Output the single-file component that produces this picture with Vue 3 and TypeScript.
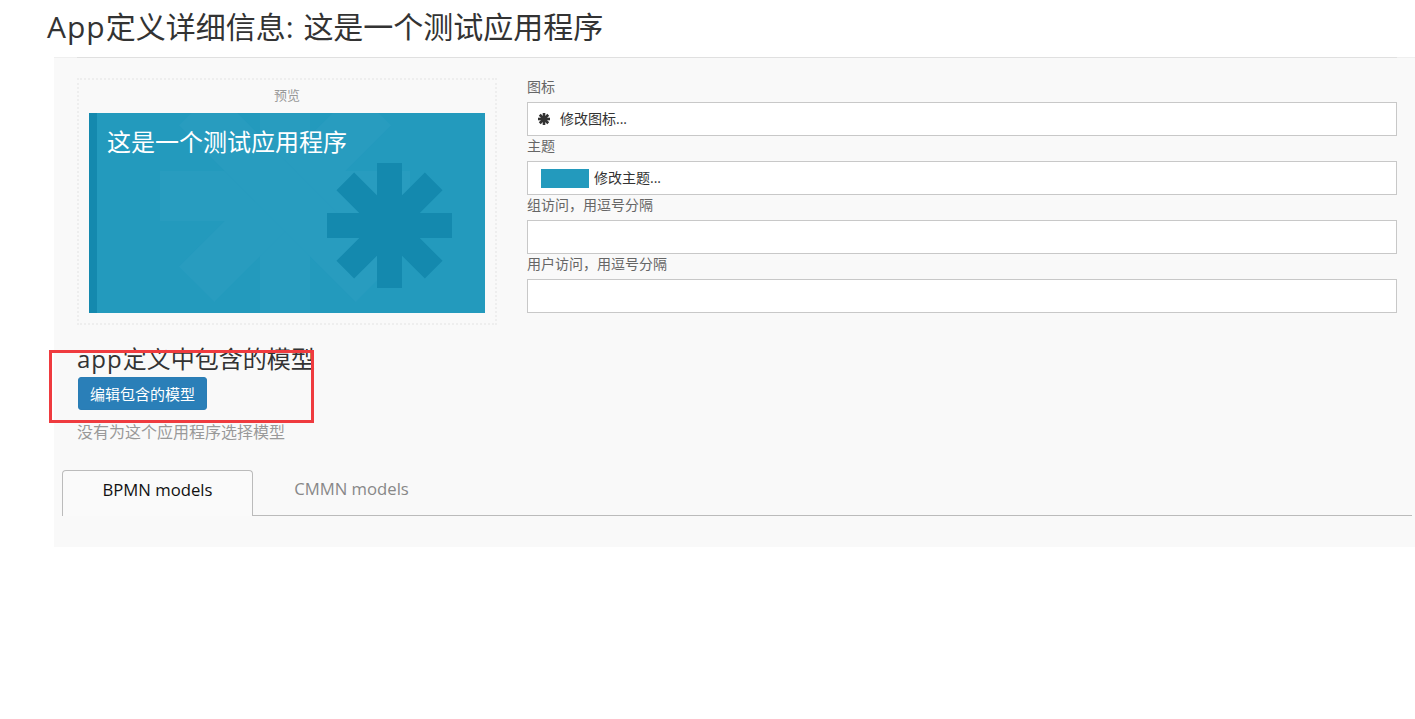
<script setup lang="ts">
const spokes = [0, 45, 90, 135];
const accessFields = ['组访问\uFF0C用逗号分隔', '用户访问\uFF0C用逗号分隔'];
const tabs = [
  { label: 'BPMN models', active: true },
  { label: 'CMMN models', active: false }
];
</script>

<template>
  <div class="page">
    <h1 class="title"><span class="latin">App</span>定义详细信息<span class="latin">: </span>这是一个测试应用程序</h1>
    <div class="panel">
      <div class="rule"></div>
      <div class="top-row">
        <div class="preview">
          <div class="preview-label">预览</div>
          <div class="tile">
            <svg class="tile-bg" viewBox="0 0 250 250" aria-hidden="true">
              <rect
                v-for="angle in spokes"
                :key="angle"
                x="100"
                y="0"
                width="50"
                height="250"
                fill="#289cbf"
                :transform="`rotate(${angle} 125 125)`"
              />
            </svg>
            <svg class="tile-icon" viewBox="0 0 125 125" aria-hidden="true">
              <rect
                v-for="angle in spokes"
                :key="angle"
                x="50"
                y="0"
                width="25"
                height="125"
                fill="#1489ae"
                :transform="`rotate(${angle} 62.5 62.5)`"
              />
            </svg>
            <div class="tile-title">这是一个测试应用程序</div>
          </div>
        </div>
        <div class="fields">
          <label class="field-label">图标</label>
          <div class="field-box">
            <svg class="small-icon" viewBox="0 0 125 125" aria-hidden="true">
              <rect
                v-for="angle in spokes"
                :key="angle"
                x="49"
                y="0"
                width="27"
                height="125"
                fill="#333"
                :transform="`rotate(${angle} 62.5 62.5)`"
              />
            </svg>
            <span class="box-text">修改图标...</span>
          </div>
          <label class="field-label">主题</label>
          <div class="field-box theme-box">
            <span class="swatch"></span>
            <span class="box-text">修改主题...</span>
          </div>
          <template v-for="field in accessFields" :key="field">
            <label class="field-label">{{ field }}</label>
            <input class="field-box" type="text" />
          </template>
        </div>
      </div>
      <h3 class="models-title"><span class="latin">app</span>定义中包含的模型</h3>
      <button class="edit-btn" type="button">编辑包含的模型</button>
      <p class="empty">没有为这个应用程序选择模型</p>
      <div class="tabs">
        <div v-for="tab in tabs" :key="tab.label" class="tab" :class="{ 'tab--active': tab.active }">
          {{ tab.label }}
        </div>
      </div>
    </div>
    <div class="callout"></div>
  </div>
</template>

<style scoped>
.page {
  position: relative;
  height: 719px;
  overflow: hidden;
  background: #fff;
  font-family: "Open Sans", "Noto Sans CJK SC", sans-serif;
  color: #333;
}

.title {
  margin: 0;
  height: 57px;
  padding: 6px 0 0 47px;
  box-sizing: border-box;
  font-size: 30px;
  line-height: 42px;
  font-weight: 400;
}

.latin {
  letter-spacing: 1px;
  white-space: pre;
}

.panel {
  margin-left: 54px;
  height: 490px;
  padding: 0 18px 0 23px;
  box-sizing: border-box;
  background: #f9f9f9;
  box-shadow: inset 0 1px 0 #efefef;
}

.rule {
  height: 1px;
  margin-bottom: 20px;
  background: #e0e0e0;
}

.top-row {
  display: flex;
  gap: 30px;
}

.preview {
  width: 420px;
  height: 247px;
  box-sizing: border-box;
  padding: 0 10px;
  border: 2px dotted #eee;
}

.preview-label {
  height: 33px;
  padding-top: 6px;
  box-sizing: border-box;
  text-align: center;
  font-size: 13px;
  line-height: 18px;
  color: #999;
}

.tile {
  position: relative;
  height: 200px;
  overflow: hidden;
  background: #239abd;
  border-left: 8px solid #1489ae;
}

.tile-bg {
  position: absolute;
  left: 63px;
  top: -42px;
  width: 250px;
  height: 250px;
}

.tile-icon {
  position: absolute;
  left: 230px;
  top: 50px;
  width: 125px;
  height: 125px;
}

.tile-title {
  position: relative;
  padding: 13px 0 0 10px;
  font-size: 24px;
  line-height: 32px;
  color: #fff;
}

.fields {
  flex: 1;
  display: flex;
  flex-direction: column;
}

.field-label {
  height: 24px;
  font-size: 14px;
  line-height: 17px;
  color: #666;
}

.field-box {
  display: flex;
  align-items: center;
  height: 34px;
  width: 100%;
  padding: 0 0 0 10px;
  margin: 0 0 1px;
  box-sizing: border-box;
  background: #fff;
  border: 1px solid #c8c8c8;
  font-size: 14px;
  color: #333;
}

.box-text {
  padding-bottom: 2px;
}

.small-icon {
  width: 12px;
  height: 12px;
  margin-right: 10px;
}

.theme-box {
  padding-left: 13px;
}

.swatch {
  width: 48px;
  height: 19px;
  margin-right: 5px;
  background: #239abd;
}

.models-title {
  margin: 19px 0 0;
  font-size: 24px;
  line-height: 30px;
  font-weight: 400;
}

.edit-btn {
  display: block;
  width: 129px;
  height: 33px;
  margin: 3px 0 0 1px;
  padding: 0;
  border: 1px solid #2a7db5;
  border-radius: 3px;
  background: #2a7fb8;
  color: #fff;
  font: inherit;
  font-size: 15px;
}

.empty {
  margin: 11px 0 0;
  font-size: 16px;
  line-height: 22px;
  color: #999;
}

.tabs {
  display: flex;
  margin: 27px -15px 0 -15px;
  border-bottom: 1px solid #bbb;
  height: 45px;
}

.tab {
  width: 191px;
  height: 46px;
  box-sizing: border-box;
  padding-top: 7px;
  text-align: center;
  font-size: 16.7px;
  line-height: 24px;
  color: #888;
}

.tab + .tab {
  margin-left: 3px;
}

.tab--active {
  border: 1px solid #bbb;
  border-bottom: 0;
  border-radius: 4px 4px 0 0;
  background: #fafafa;
  color: #111;
}

.callout {
  position: absolute;
  left: 49px;
  top: 350px;
  width: 265px;
  height: 73px;
  box-sizing: border-box;
  border: 3px solid #ef3b3f;
  pointer-events: none;
}
</style>

<style>
html,
body {
  background: #fff;
}
</style>
